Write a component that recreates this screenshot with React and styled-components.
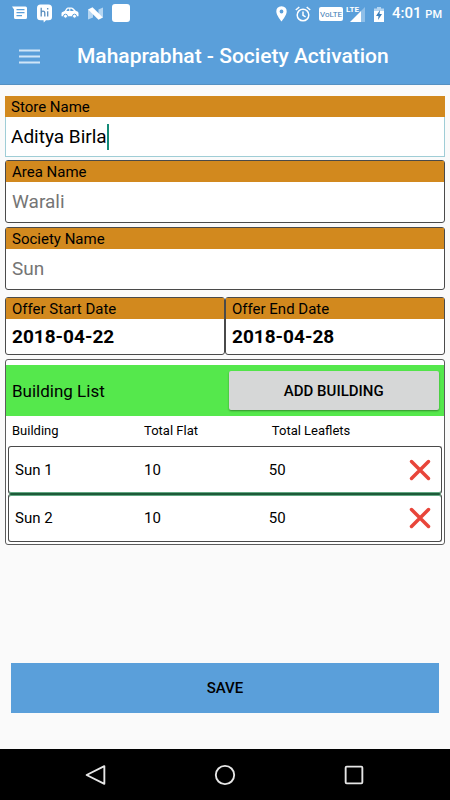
import React, { useState } from "react";
import styled, { createGlobalStyle } from "styled-components";

const GlobalStyle = createGlobalStyle`
  * {
    box-sizing: border-box;
  }
  body {
    margin: 0;
    background: #fafafa;
    color: #000000;
    font-family: Roboto, sans-serif;
  }
  button,
  input {
    font-family: inherit;
    color: inherit;
  }
`;

const Page = styled.div`
  display: flex;
  flex-direction: column;
  min-height: 100vh;
`;

const Header = styled.header`
  background: #5a9fda;
  color: #ffffff;
  border-bottom: 1px solid #5590c2;
`;

const StatusBar = styled.div`
  display: flex;
  justify-content: space-between;
  align-items: center;
  height: 28px;
  padding: 0 8px 0 12px;
`;

const StatusGroup = styled.div`
  display: flex;
  align-items: center;
  gap: ${(props) => props.$gap}px;
`;

const Notifications = styled(StatusGroup)`
  padding-bottom: 2px;
`;

const Clock = styled.div`
  font-weight: 500;
  font-size: 15px;
  line-height: 20px;
`;

const Meridiem = styled.span`
  font-size: 11px;
`;

const TitleBar = styled.div`
  display: flex;
  align-items: center;
  height: 56px;
  padding: 0 16px 0 19px;
  gap: 37px;
`;

const IconButton = styled.button`
  display: flex;
  align-items: center;
  justify-content: center;
  background: none;
  border: none;
  padding: 0;
  cursor: pointer;
`;

const Title = styled.h1`
  margin: 0;
  font-weight: 500;
  font-size: 21px;
  line-height: 28px;
`;

const Form = styled.form`
  flex: 1;
  display: flex;
  flex-direction: column;
  padding: 11px 5px 36px;
`;

const FieldBox = styled.div`
  background: #ffffff;
  border: 1px solid ${(props) => (props.$active ? "#9fcdd6" : "#4a4a4a")};
  border-radius: ${(props) => (props.$active ? 0 : 3)}px;
  margin-bottom: ${(props) => (props.$active ? 3 : 4)}px;
`;

const FieldLabel = styled.label`
  display: block;
  background: #d2891e;
  margin: ${(props) => (props.$active ? "-1px -1px 0" : 0)};
  padding: 1px 6px 0;
  font-size: 15px;
  line-height: 20px;
`;

const FieldValue = styled.div`
  display: flex;
  align-items: center;
  height: ${(props) => props.$height || 40}px;
  padding: 0 ${(props) => (props.$active ? 5 : 6)}px;
`;

const FieldInput = styled.input`
  flex: ${(props) => (props.$fit ? "none" : "1")};
  field-sizing: ${(props) => (props.$fit ? "content" : "fixed")};
  min-width: 0;
  padding: 0;
  border: none;
  outline: none;
  background: none;
  caret-color: transparent;
  font-size: 19px;
  line-height: 24px;
  font-weight: ${(props) => (props.$bold ? 700 : 400)};

  &::placeholder {
    color: #757575;
    opacity: 1;
  }
`;

const Caret = styled.span`
  width: 2px;
  height: 26px;
  background: #138a78;
`;

const DateRow = styled.div`
  display: grid;
  grid-template-columns: repeat(2, minmax(0, 1fr));
  margin: 3px 0 0;
`;

const ListBox = styled.section`
  background: #ffffff;
  border: 1px solid #5c5c5c;
  border-radius: 3px;
  padding: 5px 0 2px;
`;

const ListHeader = styled.div`
  display: grid;
  grid-template-columns: repeat(2, minmax(0, 1fr));
  gap: 6px;
  align-items: center;
  background: #55e84c;
  padding: 6px 5px 6px 6px;
`;

const ListTitle = styled.h2`
  margin: 0;
  font-weight: 400;
  font-size: 17px;
  line-height: 24px;
`;

const AddButton = styled.button`
  height: 39px;
  border: none;
  border-radius: 2px;
  background: #d6d7d7;
  box-shadow: 0 1px 2px rgba(0, 0, 0, 0.4);
  font-weight: 500;
  font-size: 15px;
  cursor: pointer;
`;

const Table = styled.table`
  display: block;
`;

const TableHead = styled.thead`
  display: block;
  padding: 0 6px;
`;

const TableBody = styled.tbody`
  display: block;
  padding: 0 2px;
`;

const HeadRow = styled.tr`
  display: grid;
  grid-template-columns: 31% 30% 1fr;
`;

const HeadCell = styled.th`
  padding: 0;
  text-align: left;
  font-weight: 400;
  font-size: 13px;
  line-height: 30px;
`;

const BuildingRow = styled.tr`
  display: grid;
  grid-template-columns: 31% 30% 1fr auto;
  align-items: center;
  height: 48px;
  padding: 0 10px 0 6px;
  border: 1px solid #4a4a4a;
  border-radius: 3px;

  & + & {
    border-top-color: #1d5a38;
    box-shadow: inset 0 1px #62a883;
  }
  &:not(:last-child) {
    border-bottom-color: #1d5a38;
    box-shadow: inset 0 -1px #62a883;
  }
`;

const Cell = styled.td`
  padding: 0;
  font-size: 15px;
  line-height: 20px;
`;

const SaveButton = styled.button`
  margin: auto 6px 0;
  height: 50px;
  border: none;
  background: #5a9fda;
  font-weight: 500;
  font-size: 15px;
  cursor: pointer;
`;

const NavBar = styled.nav`
  display: flex;
  justify-content: center;
  align-items: center;
  gap: 105px;
  height: 51px;
  background: #000000;
`;

const MessageIcon = () => (
  <svg width="16" height="14" viewBox="0 0 16 14">
    <path
      fill="#fff"
      fillRule="evenodd"
      d="M0 .5h13.5q1.500 0 1.500 1.500v9.500q0 1.500-1.500 1.500H3.500q-1.500 0-1.500-1.500V3.500zM4.500 3v1.200h8V3zM4.500 6v1.200h8V6zM4.500 9v1.200h5.500V9z"
    />
  </svg>
);

const HikeIcon = () => (
  <svg width="15" height="19" viewBox="0 0 15 19">
    <path fill="#fff" d="M3.500.5h8Q15 .5 15 4v9q0 3.300-3.500 3.300H9L6.800 18.500l-.3-2.200h-3Q0 16.300 0 13V4Q0 .5 3.500.5z" />
    <path
      d="M4.200 3.800v8.700M4.200 9.200q0-2 1.800-2t1.800 2v3.300M10.700 7.200v5.300M10.700 4v1.500"
      fill="none"
      stroke="#5a8fbf"
      strokeWidth="1.300"
    />
  </svg>
);

const CarIcon = () => (
  <svg width="18" height="12" viewBox="0 0 18 12">
    <path
      fill="#fff"
      fillRule="evenodd"
      d="M1 5.200L3.600 4 5.500 1.300Q6 .5 7 .5h3.500q1 0 1.800.7L15 4l1.500.6q1 .5 1 1.600v3H.5V6.500q0-.9.500-1.300zM5.300 4h3V1.700H6.800zM9.300 4h3.600L11 1.900q-.3-.2-.7-.2h-1z"
    />
    <circle cx="4.500" cy="9.200" r="2" fill="#fff" stroke="#5a9fda" />
    <circle cx="13.500" cy="9.200" r="2" fill="#fff" stroke="#5a9fda" />
  </svg>
);

const NougatIcon = () => (
  <svg width="15" height="13" viewBox="0 0 15 13">
    <path fill="#b5d6f2" d="M0 2.500L5 6v4.500L0 12.500zM15 .5v10L10.500 7V2.500z" />
    <path fill="#fff" d="M0 2.500L4.500.3 15 10.500l-4.500 2.200z" />
  </svg>
);

const SquareIcon = () => (
  <svg width="18" height="18" viewBox="0 0 18 18">
    <rect width="18" height="18" rx="3" fill="#fff" />
  </svg>
);

const PinIcon = () => (
  <svg width="11" height="16" viewBox="0 0 11 16">
    <path
      fill="#fff"
      fillRule="evenodd"
      d="M5.500.3Q10.700.5 10.700 5.500C10.700 9.300 5.500 15.500 5.500 15.500S.3 9.300.3 5.500Q.3.500 5.500.3zM5.500 3.600a1.900 1.900 0 100 3.800 1.900 1.900 0 000-3.800z"
    />
  </svg>
);

const AlarmIcon = () => (
  <svg width="16" height="16" viewBox="0 0 16 16" fill="none" stroke="#fff" strokeWidth="1.500">
    <circle cx="8" cy="9" r="5.800" />
    <path d="M8 5.500v3.800l2.600 1.500M.8 4L4.300 1M15.200 4L11.700 1" />
  </svg>
);

const VolteIcon = () => (
  <svg width="24" height="14" viewBox="0 0 24 14">
    <rect width="24" height="14" rx="2" fill="#fff" />
    <text x="12" y="10" textAnchor="middle" fontFamily="Roboto, sans-serif" fontSize="8" fill="#3d7cb5">
      VoLTE
    </text>
  </svg>
);

const SignalIcon = () => (
  <svg width="20" height="20" viewBox="0 0 20 20">
    <path fill="#8fbfe8" d="M15 7L19 3v15h-4z" />
    <path fill="#fff" d="M4 18L15 7v11z" />
    <text x="0" y="8" fontFamily="Roboto, sans-serif" fontWeight="700" fontSize="8" fill="#fff">
      LTE
    </text>
  </svg>
);

const BatteryIcon = () => (
  <svg width="10" height="15" viewBox="0 0 10 15">
    <path fill="#b5d6f2" d="M0 1.500h3V0h4v1.500h3V5H0z" />
    <path fill="#fff" d="M0 4h10v11H0z" />
    <path fill="#3c7fbb" d="M6 3L2 9h2.500L4 13l4-6H5.500z" />
  </svg>
);

const MenuIcon = () => (
  <svg width="21" height="15" viewBox="0 0 21 15">
    <path d="M0 1.500h21M0 7.500h21M0 13.500h21" stroke="#cfe5f7" strokeWidth="2" />
  </svg>
);

const CrossIcon = () => (
  <svg width="22" height="22" viewBox="0 0 22 22">
    <path d="M2.500 2.500l17 17M19.500 2.500l-17 17" stroke="#e8453a" strokeWidth="3.500" strokeLinecap="round" />
  </svg>
);

const navIcons = [
  { name: "Back", shape: <path d="M18.500 2v17L1.500 10.500z" /> },
  { name: "Home", shape: <circle cx="10.500" cy="10.500" r="8.800" /> },
  { name: "Recent apps", shape: <rect x="2.500" y="2.500" width="16" height="16" rx="1" /> },
];

function Field({ id, label, active, height, bold, ...inputProps }) {
  return (
    <FieldBox $active={active}>
      <FieldLabel htmlFor={id} $active={active}>
        {label}
      </FieldLabel>
      <FieldValue $height={height} $active={active}>
        <FieldInput id={id} type="text" $bold={bold} $fit={active} {...inputProps} />
        {active && <Caret />}
      </FieldValue>
    </FieldBox>
  );
}

export default function App() {
  const [store, setStore] = useState("Aditya Birla");
  const [buildings, setBuildings] = useState([
    { name: "Sun 1", flats: 10, leaflets: 50 },
    { name: "Sun 2", flats: 10, leaflets: 50 },
  ]);

  const addBuilding = () => {
    setBuildings([...buildings, { name: `Sun ${buildings.length + 1}`, flats: 10, leaflets: 50 }]);
  };

  const removeBuilding = (name) => {
    setBuildings(buildings.filter((building) => building.name !== name));
  };

  return (
    <Page>
      <GlobalStyle />
      <Header>
        <StatusBar>
          <Notifications $gap={9}>
            <MessageIcon />
            <HikeIcon />
            <CarIcon />
            <NougatIcon />
            <SquareIcon />
          </Notifications>
          <StatusGroup $gap={8}>
            <PinIcon />
            <AlarmIcon />
            <StatusGroup $gap={3}>
              <VolteIcon />
              <SignalIcon />
            </StatusGroup>
            <BatteryIcon />
            <Clock>
              4:01 <Meridiem>PM</Meridiem>
            </Clock>
          </StatusGroup>
        </StatusBar>
        <TitleBar>
          <IconButton type="button" aria-label="Menu">
            <MenuIcon />
          </IconButton>
          <Title>Mahaprabhat - Society Activation</Title>
        </TitleBar>
      </Header>
      <Form onSubmit={(e) => e.preventDefault()}>
        <Field
          id="store"
          label="Store Name"
          active
          height={39}
          value={store}
          onChange={(e) => setStore(e.target.value)}
        />
        <Field id="area" label="Area Name" placeholder="Warali" />
        <Field id="society" label="Society Name" placeholder="Sun" />
        <DateRow>
          <Field id="start" label="Offer Start Date" height={35} bold defaultValue="2018-04-22" />
          <Field id="end" label="Offer End Date" height={35} bold defaultValue="2018-04-28" />
        </DateRow>
        <ListBox>
          <ListHeader>
            <ListTitle>Building List</ListTitle>
            <AddButton type="button" onClick={addBuilding}>
              ADD BUILDING
            </AddButton>
          </ListHeader>
          <Table>
            <TableHead>
              <HeadRow>
                <HeadCell>Building</HeadCell>
                <HeadCell>Total Flat</HeadCell>
                <HeadCell>Total Leaflets</HeadCell>
              </HeadRow>
            </TableHead>
            <TableBody>
              {buildings.map((building) => (
                <BuildingRow key={building.name}>
                  <Cell>{building.name}</Cell>
                  <Cell>{building.flats}</Cell>
                  <Cell>{building.leaflets}</Cell>
                  <Cell>
                    <IconButton
                      type="button"
                      aria-label={`Remove ${building.name}`}
                      onClick={() => removeBuilding(building.name)}
                    >
                      <CrossIcon />
                    </IconButton>
                  </Cell>
                </BuildingRow>
              ))}
            </TableBody>
          </Table>
        </ListBox>
        <SaveButton type="submit">SAVE</SaveButton>
      </Form>
      <NavBar>
        {navIcons.map((icon) => (
          <IconButton key={icon.name} type="button" aria-label={icon.name}>
            <svg width="24" height="24" viewBox="-1 -1 23 23" fill="none" stroke="#e6e6e6" strokeWidth="1.800" strokeLinejoin="round">
              {icon.shape}
            </svg>
          </IconButton>
        ))}
      </NavBar>
    </Page>
  );
}
